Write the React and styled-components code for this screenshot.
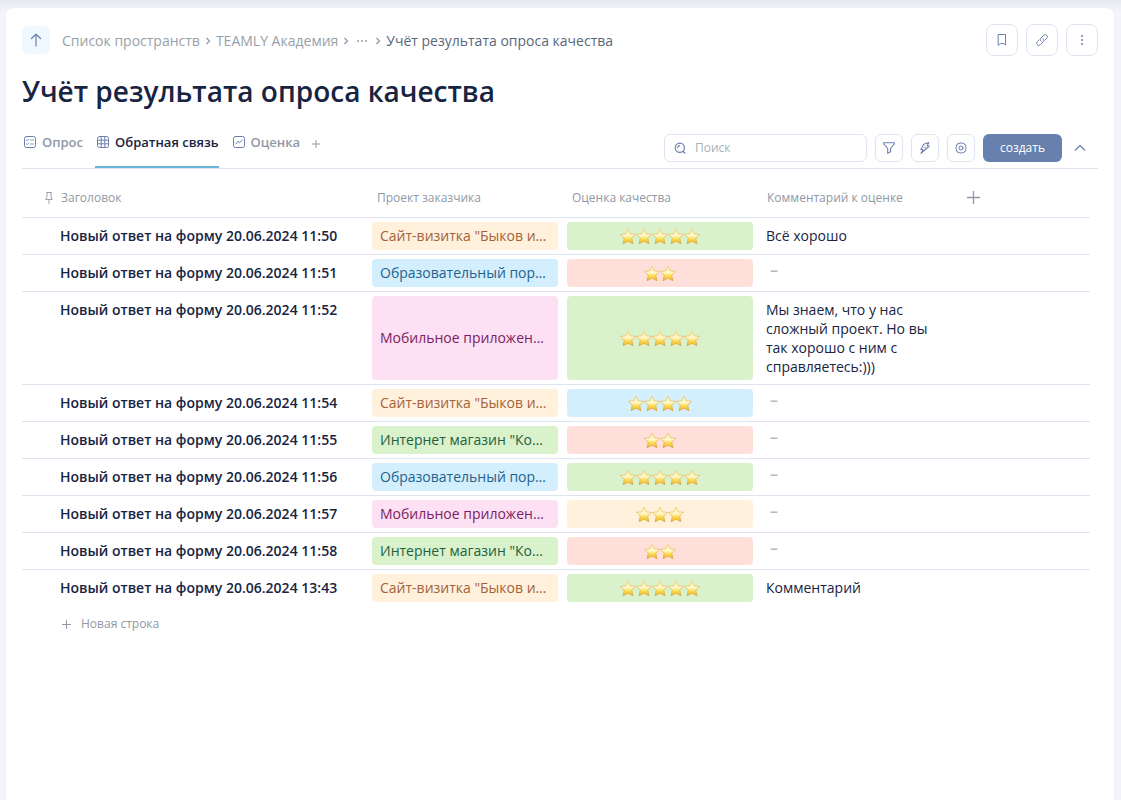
import React from 'react';
import styled, { createGlobalStyle } from 'styled-components';

const GlobalStyle = createGlobalStyle`
  * {
    box-sizing: border-box;
  }

  body {
    margin: 0;
    background: #f3f4fa;
    color: #172442;
    font-family: 'Open Sans', 'Noto Sans', sans-serif;
    font-size: 14px;
  }

  button,
  input {
    font-family: inherit;
  }
`;

const Page = styled.div`
  min-height: 100vh;
  padding: 8px 7px 0 6px;
  display: flex;
  background: linear-gradient(#e8e9ee, #f3f4fa 12px);
`;

const Card = styled.main`
  flex: 1;
  min-width: 0;
  padding: 16px;
  border-radius: 8px 8px 0 0;
  background: #ffffff;
`;

const Header = styled.header`
  display: flex;
  align-items: center;
  justify-content: space-between;
`;

const HeaderSide = styled.div`
  display: flex;
  align-items: center;
  gap: ${(props) => props.$gap};
`;

const UpButton = styled.button`
  display: flex;
  align-items: center;
  justify-content: center;
  width: 28px;
  height: 28px;
  padding: 0;
  border: none;
  border-radius: 6px;
  background: #eef8fe;
  color: #6a7fae;
  cursor: pointer;
`;

const Breadcrumbs = styled.nav`
  display: flex;
  align-items: center;
  gap: 5px;
  padding-top: 2px;
  color: #8f99a5;
  line-height: 20px;
`;

const Crumb = styled.a`
  color: ${(props) => (props.$current ? '#5a677b' : '#98a1a9')};
  text-decoration: none;
`;

const MoreCrumbs = styled.button`
  display: flex;
  padding: 0 2px;
  border: none;
  background: none;
  color: #98a1a9;
  cursor: pointer;
`;

const IconButton = styled.button`
  display: flex;
  align-items: center;
  justify-content: center;
  flex: none;
  width: ${(props) => props.$size};
  height: ${(props) => props.$size};
  padding: 0;
  border: 1px solid #dde4ef;
  border-radius: ${(props) => props.$radius || '6px'};
  background: #ffffff;
  color: #6a7fae;
  cursor: pointer;
`;

const Title = styled.h1`
  margin: 15px 0 23px;
  font-size: 28px;
  font-weight: 600;
  line-height: 40px;
`;

const Toolbar = styled.div`
  display: flex;
  align-items: flex-start;
  justify-content: space-between;
  border-bottom: 1px solid #dde4ef;
`;

const Tabs = styled.div`
  display: flex;
  gap: 12px;
`;

const Tab = styled.button`
  display: flex;
  align-items: center;
  gap: 6px;
  height: 34px;
  padding: 0 0 16px 2px;
  border: none;
  border-bottom: 2px solid ${(props) => (props.$active ? '#6ab5d8' : 'transparent')};
  background: none;
  color: ${(props) => (props.$active ? '#172442' : '#8f99a5')};
  font-size: 13px;
  font-weight: 600;
  line-height: 16px;
  cursor: pointer;

  svg {
    color: #6a7fae;
  }
`;

const AddTab = styled.button`
  display: flex;
  height: 20px;
  padding: 6px 0 0;
  border: none;
  background: none;
  color: #8f99a5;
  cursor: pointer;
`;

const Actions = styled.div`
  display: flex;
  gap: 8px;
`;

const SearchBox = styled.label`
  display: flex;
  align-items: center;
  gap: 8px;
  width: 203px;
  height: 28px;
  padding: 0 8px;
  border: 1px solid #dde4ef;
  border-radius: 6px;
  color: #6a7fae;
`;

const SearchInput = styled.input`
  flex: 1;
  min-width: 0;
  padding: 0 0 2px;
  border: none;
  outline: none;
  background: none;
  color: #172442;
  font-size: 12px;

  &::placeholder {
    color: #a9b0b8;
    opacity: 1;
  }
`;

const CreateButton = styled.button`
  height: 28px;
  padding: 0 17px 2px;
  border: none;
  border-radius: 6px;
  background: #6780ad;
  color: #ffffff;
  font-size: 12px;
  cursor: pointer;
`;

const CollapseButton = styled.button`
  display: flex;
  align-items: center;
  justify-content: center;
  width: 20px;
  height: 28px;
  margin-right: 8px;
  padding: 0;
  border: none;
  background: none;
  color: #6a7fae;
  cursor: pointer;
`;

const TableArea = styled.div`
  padding-right: 8px;
`;

const Table = styled.table`
  width: 100%;
  table-layout: fixed;
  border-collapse: separate;
  border-spacing: 0;
`;

const HeadCell = styled.th`
  width: ${(props) => props.$width || 'auto'};
  height: 49px;
  padding: 10px 10px 0;
  border-bottom: 1px solid #dde4ef;
  color: #8f99a5;
  font-size: 12px;
  font-weight: 400;
  line-height: 20px;
  text-align: left;
`;

const PinnedHead = styled.div`
  display: flex;
  align-items: center;
  gap: 6px;
  padding-left: 11px;
`;

const AddColumn = styled.button`
  display: flex;
  padding: 0 5px 2px;
  border: none;
  background: none;
  color: #8f99a5;
  cursor: pointer;
`;

const Row = styled.tr`
  > td {
    border-bottom: 1px solid #dde4ef;
  }

  &:last-child > td {
    border-bottom-color: transparent;
  }
`;

const Cell = styled.td`
  height: 37px;
  padding: 4px 4px 4px 5px;
  vertical-align: top;
`;

const RowTitle = styled.div`
  padding: 4px 0 4px 33px;
  font-weight: 600;
  line-height: 20px;
`;

const palette = {
  orange: ['#fff1dc', '#a4623a'],
  blue: ['#d3eefd', '#22638c'],
  pink: ['#fde0f4', '#7a1d62'],
  green: ['#daf2cb', '#22603f'],
  red: ['#fedfda', '#8c2f22'],
};

const Tag = styled.div`
  display: flex;
  align-items: center;
  justify-content: ${(props) => (props.$center ? 'center' : 'flex-start')};
  height: 100%;
  min-height: 28px;
  padding: 0 8px;
  border-radius: 4px;
  background: ${(props) => palette[props.$tone][0]};
  color: ${(props) => palette[props.$tone][1]};
  line-height: 20px;
  white-space: nowrap;
`;

const Comment = styled.div`
  padding: 4px 20px 4px 4px;
  line-height: 19px;
`;

const Empty = styled.span`
  display: block;
  padding-left: 4px;
  color: #b4bac1;
  font-size: 16px;
  font-weight: 600;
  line-height: 15px;
`;

const AddRow = styled.button`
  display: flex;
  align-items: center;
  gap: 10px;
  margin-top: 7px;
  padding: 0 0 0 40px;
  border: none;
  background: none;
  color: #8f99a5;
  font-size: 12px;
  line-height: 20px;
  cursor: pointer;
`;

const Icon = ({ size = 12, width = 1, children }) => (
  <svg
    width={size}
    height={size}
    viewBox={`0 0 ${size} ${size}`}
    fill="none"
    stroke="currentColor"
    strokeWidth={width}
    strokeLinecap="round"
    strokeLinejoin="round"
    aria-hidden="true"
  >
    {children}
  </svg>
);

const Plus = ({ size, width }) => (
  <Icon size={size} width={width}>
    <path d={`M${size / 2} 0.5V${size - 0.5}M0.5 ${size / 2}H${size - 0.5}`} />
  </Icon>
);

const Separator = () => (
  <svg width="6" height="8" viewBox="0 0 6 8" fill="none" stroke="currentColor" strokeWidth="1.2" aria-hidden="true">
    <path d="M1.5 1L4.5 4L1.5 7" />
  </svg>
);

const Star = () => (
  <svg width="16" height="17" viewBox="0 0 16 17" aria-hidden="true">
    <path
      d="M8 1L10.3 5.8L15.6 6.4L11.7 10.1L12.9 15.7L8 13.1L3.1 15.7L4.3 10.1L0.4 6.4L5.7 5.8Z"
      fill="url(#starFill)"
      stroke="url(#starEdge)"
      strokeWidth="0.8"
      strokeLinejoin="round"
    />
  </svg>
);

const StarDefs = () => (
  <svg width="0" height="0" display="block" aria-hidden="true">
    <defs>
      <linearGradient id="starFill" x1="0" y1="0" x2="0" y2="1">
        <stop offset="0" stopColor="#fff0a0" />
        <stop offset="0.45" stopColor="#fff8cf" />
        <stop offset="0.65" stopColor="#fcdf5c" />
        <stop offset="1" stopColor="#efb320" />
      </linearGradient>
      <linearGradient id="starEdge" x1="0" y1="0" x2="0" y2="1">
        <stop offset="0" stopColor="#ecd07c" />
        <stop offset="1" stopColor="#dda03c" />
      </linearGradient>
    </defs>
  </svg>
);

const projects = {
  site: ['orange', 'Сайт-визитка "Быков и…'],
  portal: ['blue', 'Образовательный пор…'],
  mobile: ['pink', 'Мобильное приложен…'],
  shop: ['green', 'Интернет магазин "Ко…'],
};

const scoreTones = { 2: 'red', 3: 'orange', 4: 'blue', 5: 'green' };

const rows = [
  { time: '11:50', project: 'site', score: 5, comment: 'Всё хорошо' },
  { time: '11:51', project: 'portal', score: 2 },
  {
    time: '11:52',
    project: 'mobile',
    score: 5,
    comment: 'Мы знаем, что у нас сложный проект. Но вы так хорошо с ним с справляетесь:)))',
  },
  { time: '11:54', project: 'site', score: 4 },
  { time: '11:55', project: 'shop', score: 2 },
  { time: '11:56', project: 'portal', score: 5 },
  { time: '11:57', project: 'mobile', score: 3 },
  { time: '11:58', project: 'shop', score: 2 },
  { time: '13:43', project: 'site', score: 5, comment: 'Комментарий' },
];

const App = () => {
  return (
    <Page>
      <GlobalStyle />
      <Card>
        <StarDefs />
        <Header>
          <HeaderSide $gap="12px">
            <UpButton aria-label="Наверх">
              <Icon size={14} width={1.2}>
                <path d="M7 13V1.5M2.5 5.5L7 1.2L11.5 5.5" />
              </Icon>
            </UpButton>
            <Breadcrumbs>
              <Crumb href="#">Список пространств</Crumb>
              <Separator />
              <Crumb href="#">TEAMLY Академия</Crumb>
              <Separator />
              <MoreCrumbs aria-label="Ещё">
                <svg width="12" height="4" viewBox="0 0 12 4" fill="currentColor">
                  <circle cx="2" cy="2" r="1" />
                  <circle cx="6" cy="2" r="1" />
                  <circle cx="10" cy="2" r="1" />
                </svg>
              </MoreCrumbs>
              <Separator />
              <Crumb href="#" $current>Учёт результата опроса качества</Crumb>
            </Breadcrumbs>
          </HeaderSide>
          <HeaderSide $gap="8px">
            <IconButton $size="32px" $radius="8px" aria-label="В закладки">
              <Icon size={12}>
                <path d="M2.5 0.5H9.5V11.2L8.6 10.2C7.2 9.2 4.8 9.2 3.4 10.2L2.5 11.2Z" />
              </Icon>
            </IconButton>
            <IconButton $size="32px" $radius="8px" aria-label="Ссылка">
              <Icon size={12}>
                <path d="M5 7.2C4 6.2 4.1 4.9 5 4L7.5 1.5C8.5 0.5 9.8 0.4 10.7 1.3C11.6 2.2 11.5 3.5 10.5 4.5L8.9 6.1" />
                <path d="M7 4.8C8 5.8 7.9 7.1 7 8L4.5 10.5C3.5 11.5 2.2 11.6 1.3 10.7C0.4 9.8 0.5 8.5 1.5 7.5L3.1 5.9" />
              </Icon>
            </IconButton>
            <IconButton $size="32px" $radius="8px" aria-label="Меню">
              <svg width="4" height="12" viewBox="0 0 4 12" fill="currentColor">
                <circle cx="2" cy="2" r="1" />
                <circle cx="2" cy="6" r="1" />
                <circle cx="2" cy="10" r="1" />
              </svg>
            </IconButton>
          </HeaderSide>
        </Header>

        <Title>Учёт результата опроса качества</Title>

        <Toolbar>
          <Tabs>
            <Tab>
              <Icon size={12}>
                <rect x="0.5" y="0.5" width="11" height="11" rx="2" />
                <path d="M2.3 4L3.2 4.8L4.7 3.2M2.3 7.8L3.2 8.6L4.7 7M6.5 4H9.5M6.5 8H9.5" strokeWidth="0.8" />
              </Icon>
              Опрос
            </Tab>
            <Tab $active>
              <Icon size={12}>
                <rect x="0.5" y="0.5" width="11" height="11" rx="2" />
                <path d="M4.2 0.5V11.5M7.8 0.5V11.5M0.5 4.2H11.5M0.5 7.8H11.5" />
              </Icon>
              Обратная связь
            </Tab>
            <Tab>
              <Icon size={12}>
                <rect x="0.5" y="0.5" width="11" height="11" rx="2" />
                <path d="M2.8 8L5 5.2L6.6 6.8L9.2 4" />
              </Icon>
              Оценка
            </Tab>
            <AddTab aria-label="Добавить вкладку">
              <Plus size={8} />
            </AddTab>
          </Tabs>
          <Actions>
            <SearchBox>
              <Icon size={14} width={1.2}>
                <circle cx="6.8" cy="6.8" r="4.6" />
                <path d="M10.3 10.5L11.8 12M4.6 6.6C4.7 5.6 5.5 4.8 6.5 4.7" />
              </Icon>
              <SearchInput type="search" placeholder="Поиск" aria-label="Поиск" />
            </SearchBox>
            <IconButton $size="28px" aria-label="Фильтр">
              <Icon size={12} width={1.1}>
                <path d="M0.7 0.7H11.3V2L7.5 6.5V9.7L4.7 11.4V6.5L0.7 2Z" />
              </Icon>
            </IconButton>
            <IconButton $size="28px" aria-label="Автоматизация">
              <Icon size={12} width={1.1}>
                <path d="M4.8 2.2L9.8 0.6L8.2 3.9L10.4 4.2L2 11.4L4.2 7.7L1.8 7.4Z" />
                <path d="M5 5.4L7 5L5.6 7.2" strokeWidth="0.6" />
              </Icon>
            </IconButton>
            <IconButton $size="28px" aria-label="Настройки">
              <Icon size={12}>
                <path d="M6 0.6L7.3 1.6L8.9 1.1L9.4 2.6L10.9 3.1L10.4 4.7L11.4 6L10.4 7.3L10.9 8.9L9.4 9.4L8.9 10.9L7.3 10.4L6 11.4L4.7 10.4L3.1 10.9L2.6 9.4L1.1 8.9L1.6 7.3L0.6 6L1.6 4.7L1.1 3.1L2.6 2.6L3.1 1.1L4.7 1.6Z" />
                <circle cx="6" cy="6" r="2" />
              </Icon>
            </IconButton>
            <CreateButton>создать</CreateButton>
            <CollapseButton aria-label="Свернуть">
              <Icon size={12} width={1.3}>
                <path d="M1.5 8L6 3.5L10.5 8" />
              </Icon>
            </CollapseButton>
          </Actions>
        </Toolbar>

        <TableArea>
          <Table>
            <thead>
              <tr>
                <HeadCell $width="345px">
                  <PinnedHead>
                    <Icon size={12} width={0.9}>
                      <path d="M3.8 0.5H8.2M4 0.5V4.5L2.7 7.5H9.3L8 4.5V0.5M6 7.5V11.5" />
                    </Icon>
                    Заголовок
                  </PinnedHead>
                </HeadCell>
                <HeadCell $width="195px">Проект заказчика</HeadCell>
                <HeadCell $width="195px">Оценка качества</HeadCell>
                <HeadCell $width="195px">Комментарий к оценке</HeadCell>
                <HeadCell>
                  <AddColumn aria-label="Добавить столбец">
                    <Plus size={13} width={1.3} />
                  </AddColumn>
                </HeadCell>
              </tr>
            </thead>
            <tbody>
              {rows.map((row) => {
                const [tone, name] = projects[row.project];
                return (
                  <Row key={row.time}>
                    <Cell>
                      <RowTitle>Новый ответ на форму 20.06.2024 {row.time}</RowTitle>
                    </Cell>
                    <Cell>
                      <Tag $tone={tone}>{name}</Tag>
                    </Cell>
                    <Cell>
                      <Tag $tone={scoreTones[row.score]} $center role="img" aria-label={`${row.score} из 5`}>
                        {Array.from({ length: row.score }, (_, i) => (
                          <Star key={i} />
                        ))}
                      </Tag>
                    </Cell>
                    <Cell>
                      <Comment>{row.comment || <Empty>–</Empty>}</Comment>
                    </Cell>
                    <Cell />
                  </Row>
                );
              })}
            </tbody>
          </Table>
          <AddRow>
            <Plus size={9} />
            Новая строка
          </AddRow>
        </TableArea>
      </Card>
    </Page>
  );
};

export default App;
